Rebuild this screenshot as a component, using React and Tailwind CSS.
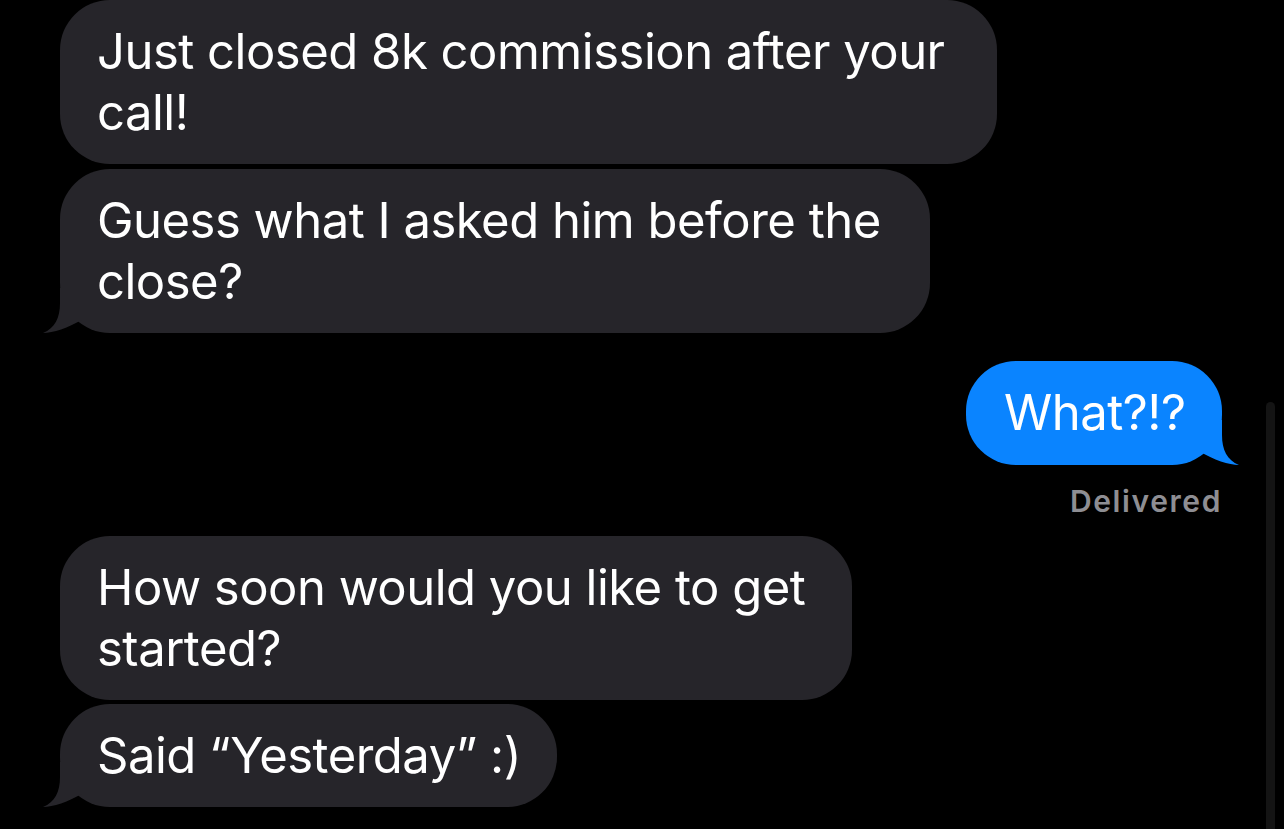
import React from 'react';

const LeftTail = () => (
    <svg className="absolute left-[-17px] bottom-0" width="42" height="45" viewBox="0 0 42 45">
        <path d="M17 0 L17 15 C17 30 12 40 0 45 C10 45 25 40 40 31 L40 0 Z" fill="#26252a" />
    </svg>
);

const RightTail = () => (
    <svg className="absolute right-[-17px] bottom-0" width="42" height="45" viewBox="0 0 42 45">
        <path d="M25 0 L25 15 C25 30 30 40 42 45 C32 45 17 40 2 31 L2 0 Z" fill="#0a84ff" />
    </svg>
);

const Received = ({ width, tail, children }) => (
    <div className={`relative ml-[60px] rounded-[50px] bg-[#26252a] pl-[37px] pr-4 pt-[21px] pb-[21px] text-[49px] leading-[61px] tracking-[-0.5px] text-white whitespace-nowrap ${width}`}>
        {children}
        {tail && <LeftTail />}
    </div>
);

const messages = [
    { lines: ['Just closed 8k commission after your', 'call!'], width: 'w-[937px]', tail: false },
    { lines: ['Guess what I asked him before the', 'close?'], width: 'w-[870px]', tail: true },
];

const later = [
    { lines: ['How soon would you like to get', 'started?'], width: 'w-[792px]', tail: false },
    { lines: ['Said \u201cYesterday\u201d :)'], width: 'w-[497px]', tail: true },
];

const App = () => {
    return (
        <div className="relative h-[829px] overflow-hidden bg-black font-['Inter','Noto_Sans',sans-serif] antialiased">
            <div className="flex flex-col">
                <div className="flex flex-col gap-[5px]">
                    {messages.map((m, i) => (
                        <Received key={i} width={m.width} tail={m.tail}>
                            {m.lines.map((l, j) => <div key={j}>{l}</div>)}
                        </Received>
                    ))}
                </div>

                <div className="mt-[28px] mr-[62px] flex flex-col items-end">
                    <div className="relative h-[104px] w-[256px] rounded-[50px] bg-[#0a84ff] pl-[38px] pt-[21px] text-[49px] leading-[61px] tracking-[-0.5px] text-white">
                        What?!?
                        <RightTail />
                    </div>
                    <div className="mt-[18px] text-[30px] font-semibold leading-[36px] tracking-[1.6px] text-[#8e8e93]">Delivered</div>
                </div>

                <div className="mt-[17px] flex flex-col gap-[4px]">
                    {later.map((m, i) => (
                        <Received key={i} width={m.width} tail={m.tail}>
                            {m.lines.map((l, j) => <div key={j}>{l}</div>)}
                        </Received>
                    ))}
                </div>
            </div>

            <div className="absolute right-[9px] top-[402px] h-[440px] w-[9px] rounded-full bg-[#141414]" />
        </div>
    );
};

export default App;
